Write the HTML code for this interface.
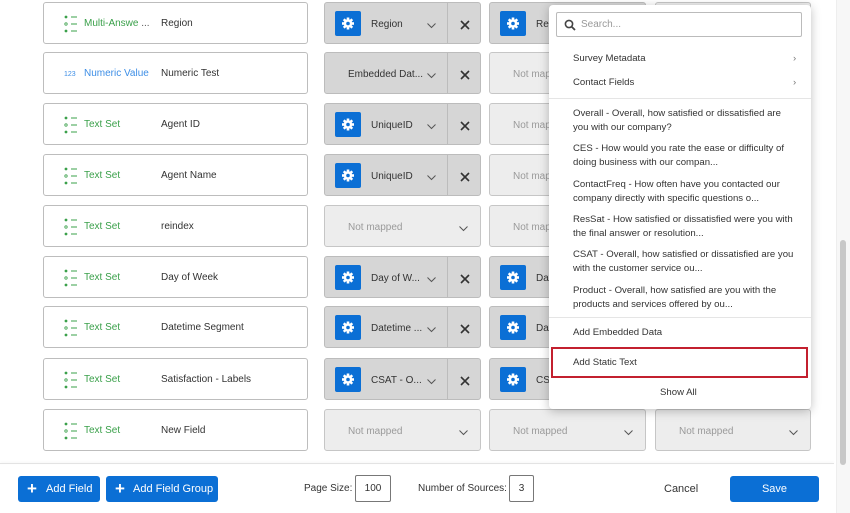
<!DOCTYPE html><html><head><style>
body{margin:0;width:850px;height:513px;background:#fff;font-family:"Liberation Sans",sans-serif;position:relative;overflow:hidden;font-size:10px;color:#333}
.a{position:absolute;box-sizing:border-box}
.card{left:43px;width:265px;height:42px;border:1px solid #bdbdbd;border-radius:3px;background:#fff}
.ty{position:absolute;left:40px;top:15px;color:#3aa04a}
.ty.b{color:#3d8ee6}
.ic{position:absolute;left:20px;top:12px;width:14px;height:18px}
.nm{position:absolute;left:117px;top:15px;color:#333}
.m{height:42px;border:1px solid #bcbcbc;border-radius:3px;background:#d6d6d6}
.nmp{height:42px;border:1px solid #c6c6c6;border-radius:3px;background:#ededed;color:#9a9a9a}
.nmp span{position:absolute;left:23px;top:16px}
.chev{position:absolute;top:18px;width:9px;height:9px}
.g{position:absolute;left:10px;top:8px;width:26px;height:25px;background:#0b6fd5;border-radius:2px}
.lab{position:absolute;left:46px;top:16px;color:#333}
.x{position:absolute;left:122px;top:0;bottom:0;border-left:1px solid #bcbcbc;width:34px}
.x svg{position:absolute;left:12px;top:17px}
.dd{left:549px;top:5px;width:262px;height:404px;background:#fff;border-radius:4px;box-shadow:0 2px 10px rgba(0,0,0,.25)}
.it{position:absolute;left:24px;color:#333;font-size:9.6px;line-height:14px}
.btn{background:#0b6fd5;color:#fff;border-radius:3px;height:26px;top:476px;font-size:11px}
</style></head><body>
<svg width="0" height="0" style="position:absolute"><defs>
<symbol id="ls" viewBox="0 0 14 18"><circle cx="2" cy="2" r="1.4" fill="#3aa04a"/><circle cx="2" cy="9" r="1.2" fill="none" stroke="#3aa04a" stroke-width=".8"/><circle cx="2" cy="16" r="1.4" fill="#3aa04a"/><path d="M7 2h6M7 9h6M7 16h6" stroke="#3aa04a" stroke-width="1"/></symbol>
<symbol id="cv" viewBox="0 0 9 9"><path d="M0.5 2.5L4.5 6.5 8.5 2.5" fill="none" stroke="#555" stroke-width="1"/></symbol>
<symbol id="gr" viewBox="0 0 26 25"><g transform="translate(13 12.5)" fill="#fff"><circle r="4.2"/><g id="t"><rect x="-1.3" y="-6" width="2.6" height="12"/></g><use href="#t" transform="rotate(45)"/><use href="#t" transform="rotate(90)"/><use href="#t" transform="rotate(135)"/><circle r="1.8" fill="#0b6fd5"/></g></symbol>
</defs></svg>

<div class="a card" style="top:2px"><svg class="ic"><use href="#ls"/></svg><span class="ty">Multi-Answe<span style="color:#555"> ...</span></span><span class="nm">Region</span></div>
<div class="a card" style="top:52px"><span class="ty b" style="left:20px;font-size:7px;top:18px">123</span><span class="ty b">Numeric Value</span><span class="nm">Numeric Test</span></div>
<div class="a card" style="top:103px"><svg class="ic"><use href="#ls"/></svg><span class="ty">Text Set</span><span class="nm">Agent ID</span></div>
<div class="a card" style="top:154px"><svg class="ic"><use href="#ls"/></svg><span class="ty">Text Set</span><span class="nm">Agent Name</span></div>
<div class="a card" style="top:205px"><svg class="ic"><use href="#ls"/></svg><span class="ty">Text Set</span><span class="nm">reindex</span></div>
<div class="a card" style="top:256px"><svg class="ic"><use href="#ls"/></svg><span class="ty">Text Set</span><span class="nm">Day of Week</span></div>
<div class="a card" style="top:306px"><svg class="ic"><use href="#ls"/></svg><span class="ty">Text Set</span><span class="nm">Datetime Segment</span></div>
<div class="a card" style="top:358px"><svg class="ic"><use href="#ls"/></svg><span class="ty">Text Set</span><span class="nm">Satisfaction - Labels</span></div>
<div class="a card" style="top:409px"><svg class="ic"><use href="#ls"/></svg><span class="ty">Text Set</span><span class="nm">New Field</span></div>

<div class="a m" style="left:324px;width:157px;top:2px"><svg class="g"><use href="#gr"/></svg><span class="lab">Region</span><svg class="chev" style="left:102px"><use href="#cv"/></svg><div class="x"><svg width="10" height="10"><path d="M1 1L9 9M9 1L1 9" stroke="#333" stroke-width="1.6"/></svg></div></div>
<div class="a m" style="left:324px;width:157px;top:52px"><span class="lab" style="left:23px">Embedded Dat...</span><svg class="chev" style="left:102px"><use href="#cv"/></svg><div class="x"><svg width="10" height="10"><path d="M1 1L9 9M9 1L1 9" stroke="#333" stroke-width="1.6"/></svg></div></div>
<div class="a m" style="left:324px;width:157px;top:103px"><svg class="g"><use href="#gr"/></svg><span class="lab">UniqueID</span><svg class="chev" style="left:102px"><use href="#cv"/></svg><div class="x"><svg width="10" height="10"><path d="M1 1L9 9M9 1L1 9" stroke="#333" stroke-width="1.6"/></svg></div></div>
<div class="a m" style="left:324px;width:157px;top:154px"><svg class="g"><use href="#gr"/></svg><span class="lab">UniqueID</span><svg class="chev" style="left:102px"><use href="#cv"/></svg><div class="x"><svg width="10" height="10"><path d="M1 1L9 9M9 1L1 9" stroke="#333" stroke-width="1.6"/></svg></div></div>
<div class="a nmp" style="left:324px;width:157px;top:205px"><span>Not mapped</span><svg class="chev" style="left:134px"><use href="#cv"/></svg></div>
<div class="a m" style="left:324px;width:157px;top:256px"><svg class="g"><use href="#gr"/></svg><span class="lab">Day of W...</span><svg class="chev" style="left:102px"><use href="#cv"/></svg><div class="x"><svg width="10" height="10"><path d="M1 1L9 9M9 1L1 9" stroke="#333" stroke-width="1.6"/></svg></div></div>
<div class="a m" style="left:324px;width:157px;top:306px"><svg class="g"><use href="#gr"/></svg><span class="lab">Datetime ...</span><svg class="chev" style="left:102px"><use href="#cv"/></svg><div class="x"><svg width="10" height="10"><path d="M1 1L9 9M9 1L1 9" stroke="#333" stroke-width="1.6"/></svg></div></div>
<div class="a m" style="left:324px;width:157px;top:358px"><svg class="g"><use href="#gr"/></svg><span class="lab">CSAT - O...</span><svg class="chev" style="left:102px"><use href="#cv"/></svg><div class="x"><svg width="10" height="10"><path d="M1 1L9 9M9 1L1 9" stroke="#333" stroke-width="1.6"/></svg></div></div>
<div class="a nmp" style="left:324px;width:157px;top:409px"><span>Not mapped</span><svg class="chev" style="left:134px"><use href="#cv"/></svg></div>

<div class="a m" style="left:489px;width:157px;top:2px"><svg class="g"><use href="#gr"/></svg><span class="lab">Region</span></div>
<div class="a nmp" style="left:489px;width:157px;top:52px"><span>Not mapped</span></div>
<div class="a nmp" style="left:489px;width:157px;top:103px"><span>Not mapped</span></div>
<div class="a nmp" style="left:489px;width:157px;top:154px"><span>Not mapped</span></div>
<div class="a nmp" style="left:489px;width:157px;top:205px"><span>Not mapped</span></div>
<div class="a m" style="left:489px;width:157px;top:256px"><svg class="g"><use href="#gr"/></svg><span class="lab">Day of Week</span></div>
<div class="a m" style="left:489px;width:157px;top:306px"><svg class="g"><use href="#gr"/></svg><span class="lab">Datetime</span></div>
<div class="a m" style="left:489px;width:157px;top:358px"><svg class="g"><use href="#gr"/></svg><span class="lab">CSAT</span></div>
<div class="a nmp" style="left:489px;width:157px;top:409px"><span>Not mapped</span><svg class="chev" style="left:134px"><use href="#cv"/></svg></div>
<div class="a nmp" style="left:655px;width:156px;top:2px"></div>
<div class="a nmp" style="left:655px;width:156px;top:409px"><span>Not mapped</span><svg class="chev" style="left:133px"><use href="#cv"/></svg></div>

<div class="a dd">
<div class="a" style="left:7px;top:7px;width:246px;height:25px;border:1px solid #bbb;border-radius:2px"><svg style="position:absolute;left:7px;top:6px" width="12" height="12"><circle cx="5" cy="5" r="3.6" fill="none" stroke="#444" stroke-width="1.6"/><path d="M7.7 7.7L11 11" stroke="#444" stroke-width="1.8"/></svg><span style="position:absolute;left:24px;top:6px;color:#999;font-size:10px">Search...</span></div>
<div class="it" style="top:47px">Survey Metadata</div><div class="it" style="top:47px;left:244px;color:#777">›</div>
<div class="it" style="top:71px">Contact Fields</div><div class="it" style="top:71px;left:244px;color:#777">›</div>
<div class="a" style="left:0;right:0;top:93px;border-top:1px solid #e5e5e5"></div>
<div class="it" style="top:102px">Overall - Overall, how satisfied or dissatisfied are<br>you with our company?</div>
<div class="it" style="top:137px">CES - How would you rate the ease or difficulty of<br>doing business with our compan...</div>
<div class="it" style="top:173px">ContactFreq - How often have you contacted our<br>company directly with specific questions o...</div>
<div class="it" style="top:208px">ResSat - How satisfied or dissatisfied were you with<br>the final answer or resolution...</div>
<div class="it" style="top:243px">CSAT - Overall, how satisfied or dissatisfied are you<br>with the customer service ou...</div>
<div class="it" style="top:279px">Product - Overall, how satisfied are you with the<br>products and services offered by ou...</div>
<div class="a" style="left:0;right:0;top:312px;border-top:1px solid #e5e5e5"></div>
<div class="it" style="top:321px">Add Embedded Data</div>
<div class="a" style="left:2px;top:342px;width:257px;height:31px;border:2px solid #c3202f"></div>
<div class="it" style="top:351px">Add Static Text</div>
<div class="it" style="top:381px;left:111px">Show All</div>
</div>

<div class="a" style="left:836px;top:0;width:14px;height:513px;background:#f7f7f7;border-left:1px solid #eee"></div>
<div class="a" style="left:840px;top:240px;width:6px;height:225px;background:#c8c8c8;border-radius:3px"></div>

<div class="a" style="left:0;width:834px;top:463px;border-top:1px solid #e3e3e3;box-shadow:0 -1px 2px rgba(0,0,0,.06)"></div>
<div class="a btn" style="left:18px;width:82px"><span style="position:absolute;left:9px;top:3px;font-size:17px;font-weight:bold">+</span><span style="position:absolute;left:28px;top:7px">Add Field</span></div>
<div class="a btn" style="left:106px;width:112px"><span style="position:absolute;left:9px;top:3px;font-size:17px;font-weight:bold">+</span><span style="position:absolute;left:27px;top:7px">Add Field Group</span></div>
<span class="a" style="left:304px;top:483px">Page Size:</span>
<div class="a" style="left:355px;top:475px;width:36px;height:27px;border:1px solid #777;border-radius:2px;text-align:center;line-height:25px">100</div>
<span class="a" style="left:418px;top:483px">Number of Sources:</span>
<div class="a" style="left:509px;top:475px;width:25px;height:27px;border:1px solid #777;border-radius:2px;text-align:center;line-height:25px">3</div>
<span class="a" style="left:664px;top:483px;font-size:11px">Cancel</span>
<div class="a btn" style="left:730px;width:89px;text-align:center;line-height:26px">Save</div>
</body></html>
